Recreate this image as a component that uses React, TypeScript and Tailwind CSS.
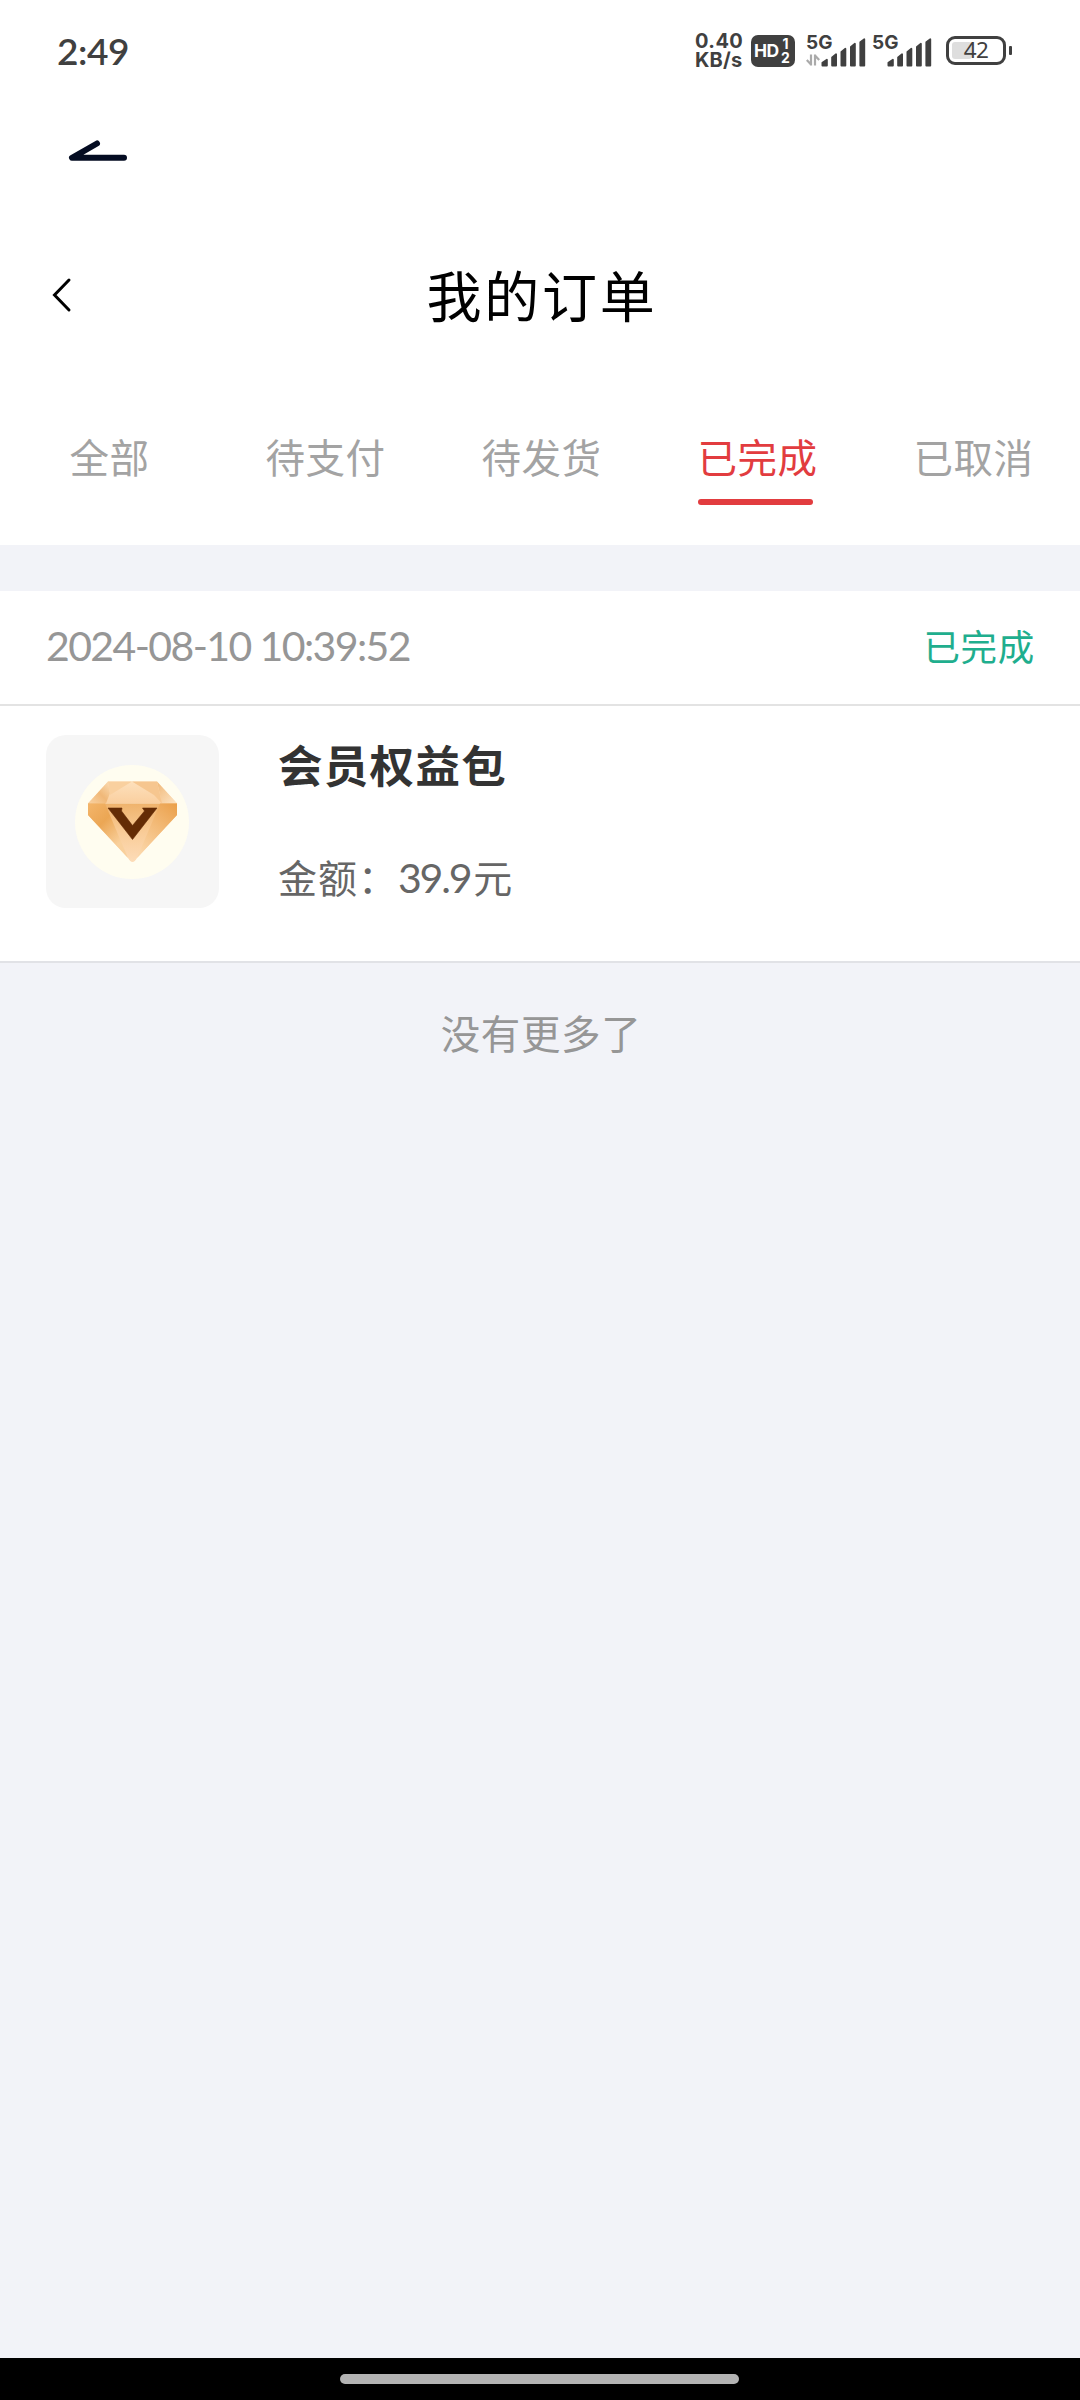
const tabs = [
  { label: "全部" },
  { label: "待支付" },
  { label: "待发货" },
  { label: "已完成", active: true },
  { label: "已取消" },
];

function SignalBars() {
  return (
    <svg width="46" height="29" viewBox="0 0 46 29" fill="#404040" stroke="#404040" strokeWidth="1.8" strokeLinejoin="round">
      <path d="M1.4 27.5V24.8L5.9 21.8V27.5Z" />
      <path d="M11.1 27.5V19.5L15.1 16.2V27.5Z" />
      <path d="M20.4 27.5V14L24.4 10.8V27.5Z" />
      <path d="M29.9 27.5V9L33.9 5.8V27.5Z" />
      <path d="M39.3 27.5V4.3L43.3 1.2V27.5Z" />
    </svg>
  );
}

function StatusBar() {
  return (
    <div className="mb-[1px] flex h-[101px] items-center pr-[68px] pl-[57px] text-[#404040]">
      <span className="font-['Lato'] text-[37px] leading-[40px] font-semibold tracking-[-0.4px]">2:49</span>
      <div className="ml-auto flex items-center">
        <div className="w-[50px] font-['Inter'] text-[20px] leading-[19px] font-bold">
          <div className="tracking-[0.4px]">0.40</div>
          <div className="whitespace-nowrap tracking-[0.2px]">KB/s</div>
        </div>
        <div className="ml-[6px] flex h-[32px] w-[44px] items-center justify-between rounded-[7px] bg-[#404040] pr-[5px] pl-[3px] font-['Inter'] font-bold text-white">
          <span className="text-[17.5px] leading-[22px] tracking-[-0.5px]">HD</span>
          <span className="flex w-[9px] flex-col items-center text-[14px] leading-[14px]">
            <span>1</span>
            <span>2</span>
          </span>
        </div>
        <div className="relative ml-[11px] h-[34px] w-[61px]">
          <span className="absolute top-0 left-0 font-['Inter'] text-[19px] leading-[17px] font-bold">5G</span>
          <svg className="absolute top-[20px] left-0" width="14" height="12" viewBox="0 0 14 12" fill="none" stroke="#aaa" strokeWidth="2.2">
            <path d="M5 0.5V11.5M5 10.5L0.8 6M9 11.5V0.5M9 1.5L13.2 6" />
          </svg>
          <div className="absolute right-0 bottom-[1px]">
            <SignalBars />
          </div>
        </div>
        <div className="relative ml-[5px] h-[34px] w-[61px]">
          <span className="absolute top-0 left-0 font-['Inter'] text-[19px] leading-[17px] font-bold">5G</span>
          <div className="absolute right-0 bottom-[1px]">
            <SignalBars />
          </div>
        </div>
        <div className="ml-[13px] flex items-center">
          <div className="relative h-[29px] w-[60px] rounded-[9px] border-[3px] border-[#404040]">
            <div className="absolute top-[3px] left-[3px] h-[17px] w-[20px] rounded-[3px] bg-[#dedede]" />
            <span className="absolute inset-0 text-center font-['Noto_Sans'] text-[22.500px] leading-[22px] tracking-[-0.6px]">42</span>
          </div>
          <div className="ml-[3px] h-[9px] w-[3px] rounded-[1px] bg-[#404040]" />
        </div>
      </div>
    </div>
  );
}

function DiamondBadge() {
  return (
    <svg width="173" height="173" viewBox="0 0 173 173">
      <defs>
        <linearGradient id="crownLeft" x1="0" y1="1" x2="1" y2="0">
          <stop offset="0" stopColor="#fad3a3" />
          <stop offset="0.5" stopColor="#f0b878" />
          <stop offset="1" stopColor="#fbdcb4" />
        </linearGradient>
        <linearGradient id="crownRight" x1="0" y1="0" x2="1" y2="1">
          <stop offset="0" stopColor="#f0b878" />
          <stop offset="1" stopColor="#fde4c4" />
        </linearGradient>
        <linearGradient id="crownMid" x1="0" y1="0" x2="0" y2="1">
          <stop offset="0" stopColor="#fde0bc" />
          <stop offset="1" stopColor="#facf9f" />
        </linearGradient>
        <linearGradient id="sideLeft" gradientUnits="userSpaceOnUse" x1="42" y1="72" x2="76" y2="105">
          <stop offset="0" stopColor="#f3b468" />
          <stop offset="0.45" stopColor="#eba654" />
          <stop offset="1" stopColor="#f9d09c" />
        </linearGradient>
        <linearGradient id="sideRight" gradientUnits="userSpaceOnUse" x1="130" y1="70" x2="92" y2="115">
          <stop offset="0" stopColor="#eba14c" />
          <stop offset="1" stopColor="#fbd6a8" />
        </linearGradient>
        <linearGradient id="pavilion" x1="0" y1="0" x2="0" y2="1">
          <stop offset="0" stopColor="#efb36c" />
          <stop offset="0.5" stopColor="#f9cc98" />
          <stop offset="1" stopColor="#fddcb8" />
        </linearGradient>
      </defs>
      <circle cx="86" cy="87" r="57" fill="#fffdf0" />
      <path d="M62 46.500H111L131 68.500H42Z" fill="url(#crownMid)" />
      <path d="M62 46.500L64 58L60 68.500H42Z" fill="url(#crownLeft)" />
      <path d="M111 46.500L131 68.500H116Z" fill="url(#crownRight)" />
      <path d="M62 46.500H86L64 60Z" fill="#f9d09f" />
      <path d="M86 46.500H111L116 68.500L108 60Z" fill="#f6c68f" />
      <path d="M42 68.500H131V80L91 123Q86.500 131 82 123L42 80Z" fill="url(#pavilion)" />
      <path d="M42 68.500H59L82 123L42 80Z" fill="url(#sideLeft)" />
      <path d="M131 68.500H114L91 123L131 80Z" fill="url(#sideRight)" />
      <path d="M62 73H76L75.500 76L86.500 90.500L98.500 76L96.500 73H111L86.500 104.500Z" fill="#642c05" stroke="#642c05" strokeWidth="0.6" />
    </svg>
  );
}

export default function App() {
  return (
    <div className="flex h-[2400px] w-[1080px] flex-col overflow-hidden bg-[#f2f3f8] font-['Noto_Sans_CJK_SC',sans-serif]">
      <header className="h-[545px] bg-white">
        <StatusBar />
        <div className="h-[126px] pt-[36px] pl-[67px]">
          <svg width="64" height="26" viewBox="0 0 64 26" fill="none" stroke="#040c22" strokeWidth="6" strokeLinecap="round" strokeLinejoin="round">
            <path d="M30 5.500L5 19.800H57" />
          </svg>
        </div>
        <div className="relative flex h-[132px] items-center justify-center">
          <svg className="absolute top-[49px] left-[50px]" width="24" height="36" viewBox="0 0 24 36" fill="none" stroke="#000" strokeWidth="3" strokeLinecap="round">
            <path d="M19 3L4.500 18L19 33" />
          </svg>
          <h1 className="pb-[3px] pl-[4px] text-[55px] leading-[60px] tracking-[2.800px] text-black">我的订单</h1>
        </div>
        <nav className="grid grid-cols-5 pt-[67px]">
          {tabs.map((tab) => (
            <div
              key={tab.label}
              className={
                tab.active
                  ? "flex flex-col items-center text-[39.500px] leading-[58px] text-[#e23c3f]"
                  : "flex flex-col items-center text-[39.500px] leading-[58px] text-[#a3a3a3]"
              }
            >
              <span className="pl-[3px] tracking-[0.5px]">{tab.label}</span>
              {tab.active && <div className="mt-[14px] mr-[2px] h-[6px] w-[115px] rounded-full bg-[#e23c3f]" />}
            </div>
          ))}
        </nav>
      </header>

      <article className="mt-[46px] bg-white">
        <div className="flex h-[115px] items-center justify-between border-b-2 border-[#e3e3e3] pr-[45px] pb-[4px] pl-[46px]">
          <time className="font-['Lato'] text-[41px] leading-[56px] tracking-[-1.600px] text-[#969696]">2024-08-10 10:39:52</time>
          <span className="text-[36.500px] leading-[54px] tracking-[0.700px] text-[#1fae8e]">已完成</span>
        </div>
        <div className="flex h-[257px] border-b-2 border-[#e1e2e6] pt-[29px] pl-[46px]">
          <div className="size-[173px] rounded-[20px] bg-[#f6f6f6]">
            <DiamondBadge />
          </div>
          <div className="-mt-[1px] ml-[59px]">
            <h2 className="text-[44.500px] leading-[60px] font-bold tracking-[1.300px] text-[#333]">会员权益包</h2>
            <p className="mt-[54px] text-[39px] leading-[56px] text-[#666]">
              <span className="tracking-[1px]">金额：</span>
              <span className="font-['Lato'] text-[41px] tracking-[-2.200px]">39.9</span>
              <span className="ml-[3px]">元</span>
            </p>
          </div>
        </div>
      </article>

      <p className="mt-[40px] pl-[2px] text-center text-[39.500px] leading-[58px] tracking-[0.6px] text-[#969696]">没有更多了</p>

      <footer className="mt-auto flex h-[42px] justify-center bg-black pt-[16px]">
        <div className="mr-[1px] h-[10px] w-[399px] rounded-full bg-[#b3b3b3]" />
      </footer>
    </div>
  );
}
